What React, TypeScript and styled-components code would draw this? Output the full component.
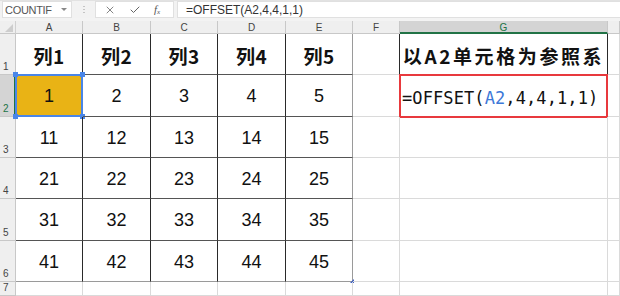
import React from "react";
import styled, { createGlobalStyle, css } from "styled-components";
import { X, Check } from "lucide-react";

const Global = createGlobalStyle`
  html, body { margin: 0; padding: 0; background: #fff; overflow: hidden; }
  body { width: 620px; height: 296px; font-family: "Liberation Sans", Arial, sans-serif; }
`;

const Page = styled.div`
  width: 620px;
  height: 296px;
  display: flex;
  flex-direction: column;
  overflow: hidden;
`;

const TopBar = styled.div`
  height: 22px;
  box-sizing: border-box;
  background: #f2f2f2;
  border-top: 1px solid #e2e2e2;
  display: flex;
  align-items: center;
  padding: 0 0 0 2px;
  gap: 0;
`;

const NameBox = styled.div`
  width: 70px;
  height: 17px;
  box-sizing: border-box;
  background: #fff;
  border: 1px solid #e0e0e0;
  display: flex;
  align-items: center;
  justify-content: space-between;
  padding: 0 4px 0 2px;
  font-size: 11px;
  color: #555;
  letter-spacing: -0.3px;
`;

const DropArrow = styled.span`
  width: 0;
  height: 0;
  border-left: 3px solid transparent;
  border-right: 3px solid transparent;
  border-top: 3px solid #888;
`;

const Grip = styled.div`
  width: 2px;
  height: 9px;
  margin: 0 10px 0 11px;
  background-image: radial-gradient(circle, #c4c4c4 0.8px, transparent 1px);
  background-size: 2px 3px;
`;

const ActionBox = styled.div`
  width: 79px;
  height: 17px;
  box-sizing: border-box;
  background: #fff;
  border: 1px solid #e0e0e0;
  display: flex;
  align-items: center;
  padding-left: 8px;
  gap: 13px;
  color: #666;
`;

const Fx = styled.span`
  font-family: "Liberation Serif", serif;
  font-style: italic;
  font-size: 11px;
  color: #555;
  sub { font-size: 7px; vertical-align: -1px; }
`;

const FormulaInput = styled.div`
  flex: 1;
  height: 17px;
  margin-left: 3px;
  box-sizing: border-box;
  background: #fff;
  border: 1px solid #e0e0e0;
  border-right: none;
  display: flex;
  align-items: center;
  padding-left: 8px;
  font-size: 12px;
  color: #333;
`;

const Band = styled.div`
  height: 6px;
  background: #f3f3f3;
`;

const Sheet = styled.div`
  flex: 1;
  display: grid;
  grid-template-columns: 16px 67px 68px 67px 68px 67px 47px 208px 1fr;
  grid-template-rows: 13px 41px 42px 41px 41px 42px 41px 1fr;
`;

const Corner = styled.div`
  background: #efefef;
  box-sizing: border-box;
  border-right: 1px solid #d0d0d0;
  border-bottom: 1px solid #c8c8c8;
  position: relative;
  &::after {
    content: "";
    position: absolute;
    right: 2px;
    bottom: 1px;
    width: 0;
    height: 0;
    border-left: 8px solid transparent;
    border-bottom: 8px solid #cdcdcd;
  }
`;

const ColHeader = styled.div<{ $active?: boolean }>`
  box-sizing: border-box;
  background: ${(p) => (p.$active ? "#d4d4d4" : "#efefef")};
  border-right: 1px solid #c8c8c8;
  border-bottom: ${(p) => (p.$active ? "2px solid #217346" : "1px solid #c8c8c8")};
  display: flex;
  align-items: center;
  justify-content: center;
  font-size: 10px;
  color: ${(p) => (p.$active ? "#217346" : "#444")};
  padding-top: 1px;
`;

const RowHeader = styled.div<{ $active?: boolean }>`
  box-sizing: border-box;
  background: ${(p) => (p.$active ? "#d4d4d4" : "#efefef")};
  border-right: ${(p) => (p.$active ? "2px solid #217346" : "1px solid #c8c8c8")};
  border-bottom: 1px solid #c8c8c8;
  display: flex;
  align-items: flex-end;
  padding: 0 0 2px 3px;
  font-size: 10px;
  color: ${(p) => (p.$active ? "#217346" : "#444")};
`;

type Kind = "plain" | "table" | "title" | "formula";

const Cell = styled.div<{ $kind: Kind; $lastCol?: boolean; $lastRow?: boolean; $fill?: boolean }>`
  position: relative;
  box-sizing: border-box;
  display: flex;
  align-items: center;
  justify-content: center;
  color: #111;
  border-right: 1px solid #dadada;
  border-bottom: 1px solid #dadada;
  ${(p) =>
    p.$kind === "table" &&
    css`
      border-right: 1px solid ${p.$lastCol ? "#9a9a9a" : "#2a2a2a"};
      border-bottom: 1px solid ${p.$lastRow ? "#9a9a9a" : "#555"};
      font-family: "Liberation Sans", Arial, sans-serif;
      font-size: 18px;
      padding-top: 2px;
    `}
  ${(p) =>
    p.$fill &&
    css`
      background: #e9b315;
    `}
  ${(p) =>
    p.$kind === "title" &&
    css`
      border-left: 1px solid #2a2a2a;
      border-right: 1px solid #2a2a2a;
      border-bottom: 1px solid #555;
      margin-left: -1px;
      font-family: "Noto Sans CJK SC", sans-serif;
      font-weight: 700;
      font-size: 19px;
      letter-spacing: 2.6px;
      padding-top: 2px;
    `}
  ${(p) =>
    p.$kind === "formula" &&
    css`
      border: 2px solid #e8393d;
      margin: -1px 0 -1px -1px;
      justify-content: flex-start;
      padding: 4px 0 0 1px;
      font-family: "DejaVu Sans Mono", monospace;
      font-size: 17px;
      letter-spacing: 0.1px;
      color: #111;
    `}
`;

const HeadText = styled.span`
  font-family: "Noto Sans CJK SC", sans-serif;
  font-weight: 700;
  font-size: 19px;
  letter-spacing: 0.5px;
`;

const RefSel = styled.div`
  position: absolute;
  inset: -1px -1px -1px -1px;
  border: 2px solid #4a86e8;
  pointer-events: none;
`;

const Handle = styled.span<{ $x: "l" | "r"; $y: "t" | "b" }>`
  position: absolute;
  width: 5px;
  height: 5px;
  background: #4a86e8;
  ${(p) => (p.$x === "l" ? "left: -4px;" : "right: -4px;")}
  ${(p) => (p.$y === "t" ? "top: -4px;" : "bottom: -4px;")}
`;

const CornerMark = styled.span`
  position: absolute;
  right: -2px;
  bottom: -2px;
  width: 0;
  height: 0;
  border-left: 4px solid transparent;
  border-bottom: 4px solid #3b5fc4;
`;

const Ref = styled.span`
  color: #3c78d8;
`;

const colLetters = ["A", "B", "C", "D", "E", "F", "G", ""];
const heads = ["列1", "列2", "列3", "列4", "列5"];
const body = [
  [1, 2, 3, 4, 5],
  [11, 12, 13, 14, 15],
  [21, 22, 23, 24, 25],
  [31, 32, 33, 34, 35],
  [41, 42, 43, 44, 45],
];

export default function App() {
  const rows: React.ReactNode[] = [];
  rows.push(<RowHeader key="rh1">1</RowHeader>);
  heads.forEach((h, i) =>
    rows.push(
      <Cell key={`h${i}`} $kind="table" $lastCol={i === 4}>
        <HeadText>{h}</HeadText>
      </Cell>
    )
  );
  rows.push(<Cell key="f1" $kind="plain" />);
  rows.push(
    <Cell key="g1" $kind="title">
      以A2单元格为参照系
    </Cell>
  );
  rows.push(<Cell key="hh1" $kind="plain" />);

  body.forEach((r, ri) => {
    const rowNum = ri + 2;
    rows.push(
      <RowHeader key={`rh${rowNum}`} $active={rowNum === 2}>
        {rowNum}
      </RowHeader>
    );
    r.forEach((v, ci) => {
      const sel = ri === 0 && ci === 0;
      rows.push(
        <Cell key={`c${ri}-${ci}`} $kind="table" $lastCol={ci === 4} $lastRow={ri === 4} $fill={sel}>
          {v}
          {sel && (
            <RefSel>
              <Handle $x="l" $y="t" />
              <Handle $x="r" $y="t" />
              <Handle $x="l" $y="b" />
              <Handle $x="r" $y="b" />
            </RefSel>
          )}
          {ri === 4 && ci === 4 && <CornerMark />}
        </Cell>
      );
    });
    rows.push(<Cell key={`f${rowNum}`} $kind="plain" />);
    if (rowNum === 2) {
      rows.push(
        <Cell key="g2" $kind="formula">
          =OFFSET(<Ref>A2</Ref>,4,4,1,1)
        </Cell>
      );
    } else {
      rows.push(<Cell key={`g${rowNum}`} $kind="plain" />);
    }
    rows.push(<Cell key={`hh${rowNum}`} $kind="plain" />);
  });

  rows.push(<RowHeader key="rh7">7</RowHeader>);
  for (let i = 0; i < 8; i++) rows.push(<Cell key={`r7-${i}`} $kind="plain" />);

  return (
    <Page>
      <Global />
      <TopBar>
        <NameBox>
          COUNTIF
          <DropArrow />
        </NameBox>
        <Grip />
        <ActionBox>
          <X size={12} strokeWidth={1.6} color="#666" />
          <Check size={12} strokeWidth={2} color="#666" />
          <Fx>
            f<sub>x</sub>
          </Fx>
        </ActionBox>
        <FormulaInput>=OFFSET(A2,4,4,1,1)</FormulaInput>
      </TopBar>
      <Band />
      <Sheet>
        <Corner />
        {colLetters.map((c, i) => (
          <ColHeader key={i} $active={c === "G"}>
            {c}
          </ColHeader>
        ))}
        {rows}
      </Sheet>
    </Page>
  );
}
